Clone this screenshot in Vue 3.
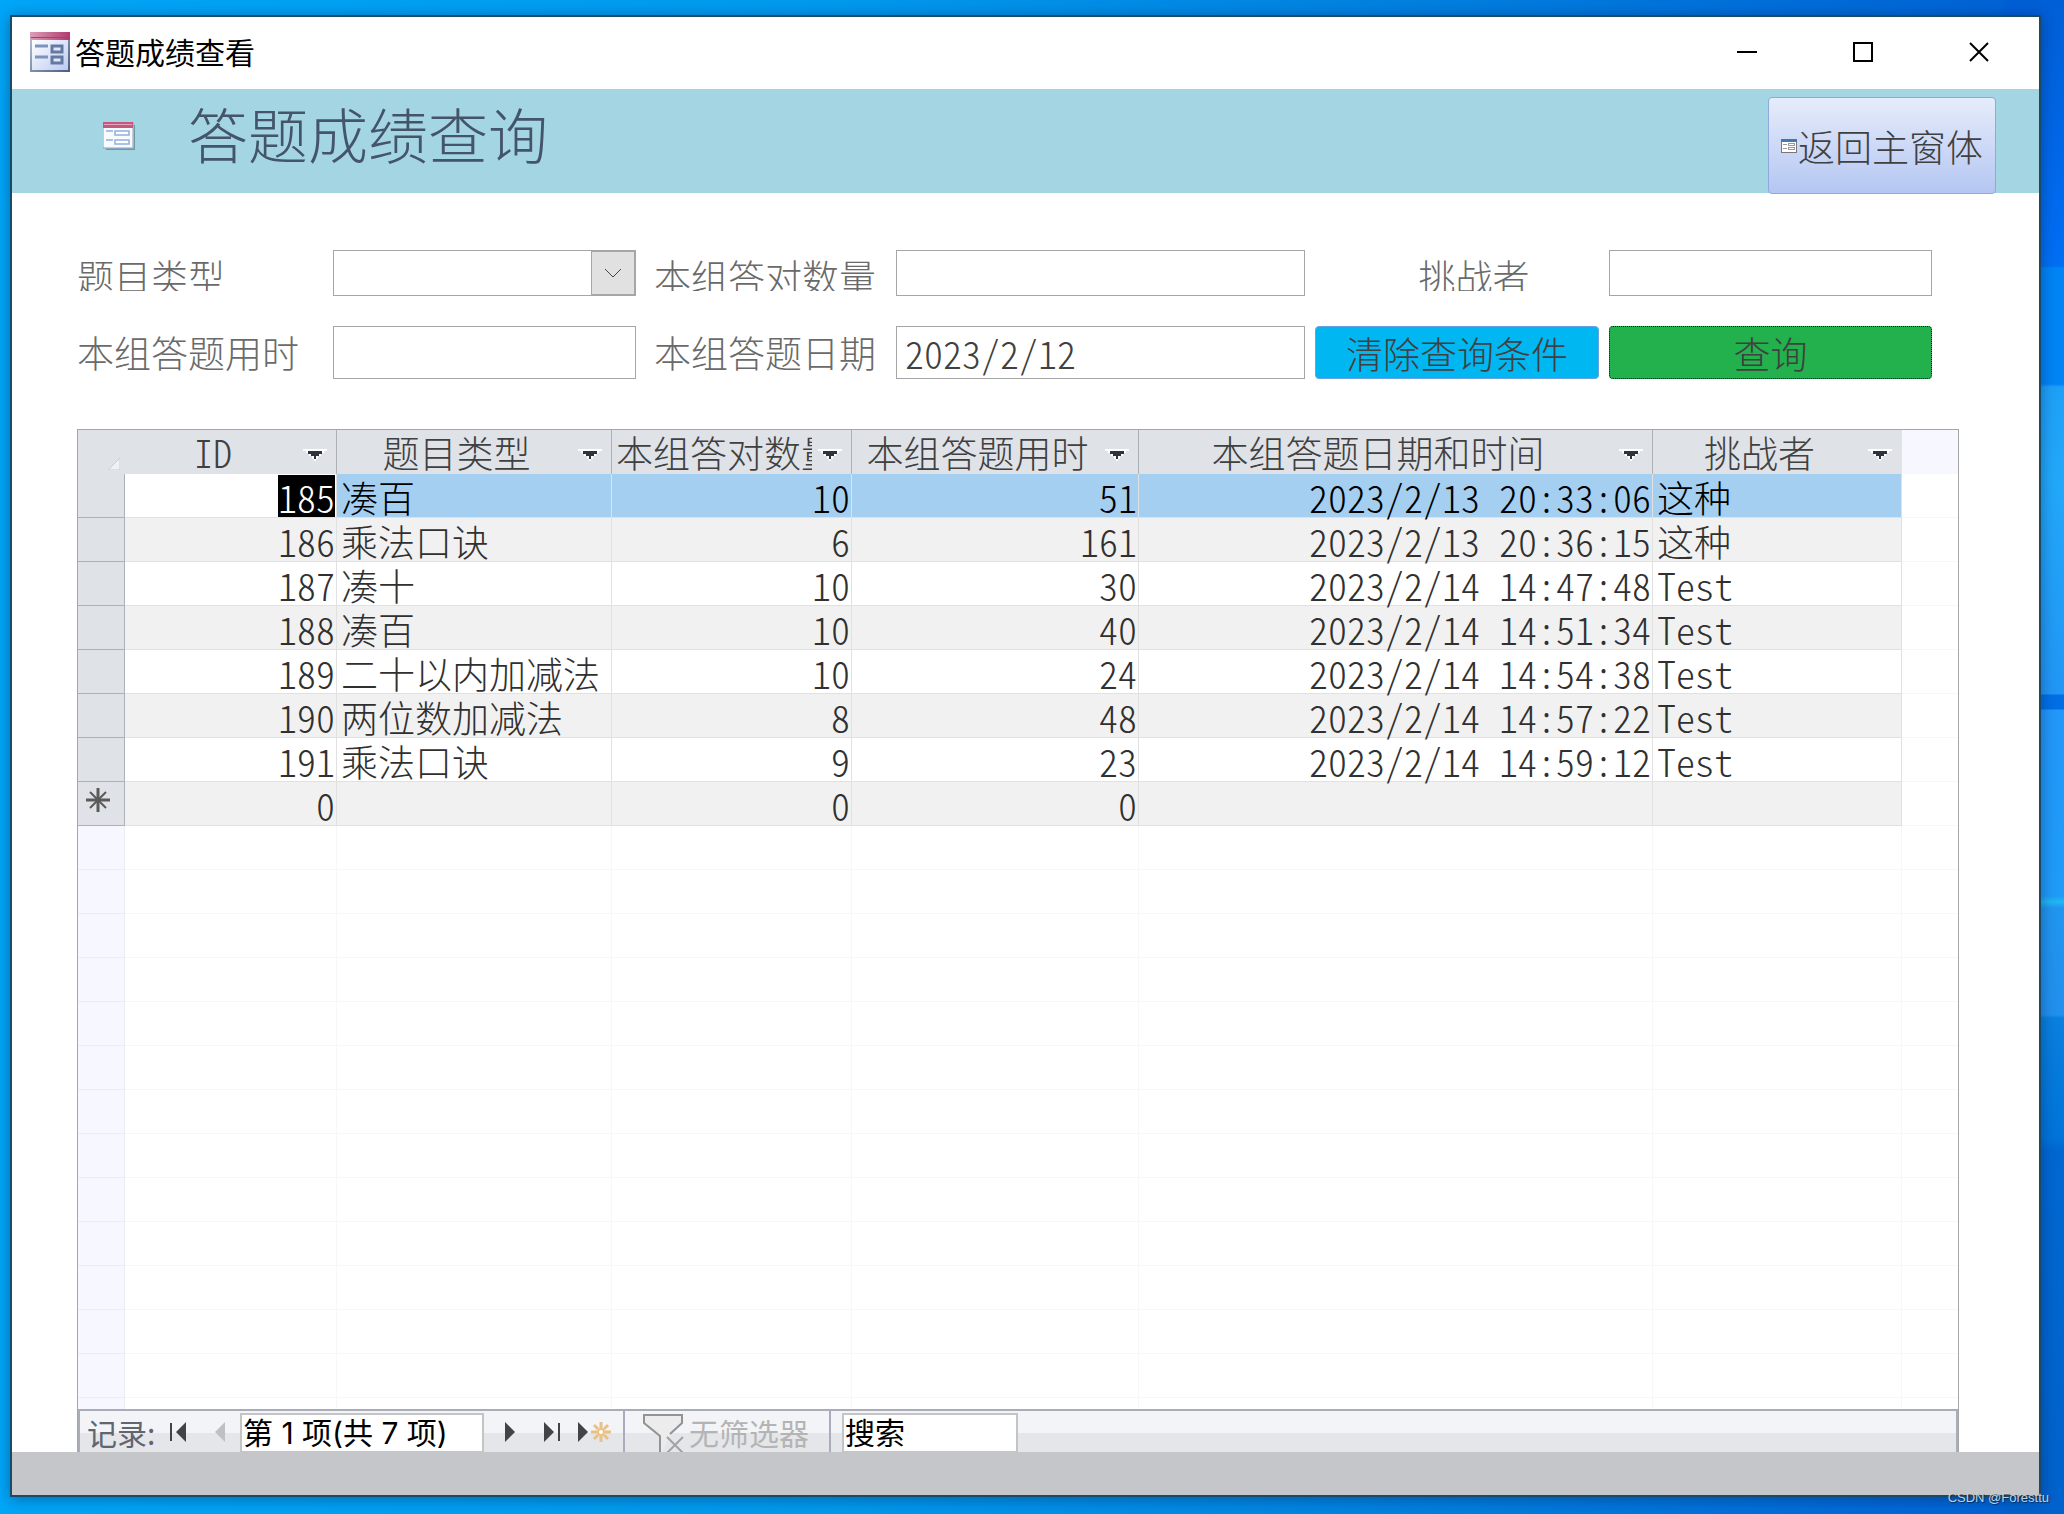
<script setup>
import { ref } from 'vue'

const questionType = ref('')
const correctCount = ref('')
const challenger = ref('')
const duration = ref('')
const answerDate = ref('2023/2/12')
const recordPosition = ref('第 1 项(共 7 项)')
const keyword = ref('搜索')

const questionTypes = ['', '凑十', '凑百', '乘法口诀', '二十以内加减法', '两位数加减法']

const columns = [
  { key: 'id', label: 'ID', numeric: true },
  { key: 'type', label: '题目类型' },
  { key: 'correct', label: '本组答对数量', numeric: true },
  { key: 'seconds', label: '本组答题用时', numeric: true },
  { key: 'time', label: '本组答题日期和时间', numeric: true },
  { key: 'who', label: '挑战者' },
]

const rows = [
  { id: 185, type: '凑百', correct: 10, seconds: 51, time: '2023/2/13 20:33:06', who: '这种' },
  { id: 186, type: '乘法口诀', correct: 6, seconds: 161, time: '2023/2/13 20:36:15', who: '这种' },
  { id: 187, type: '凑十', correct: 10, seconds: 30, time: '2023/2/14 14:47:48', who: 'Test' },
  { id: 188, type: '凑百', correct: 10, seconds: 40, time: '2023/2/14 14:51:34', who: 'Test' },
  { id: 189, type: '二十以内加减法', correct: 10, seconds: 24, time: '2023/2/14 14:54:38', who: 'Test' },
  { id: 190, type: '两位数加减法', correct: 8, seconds: 48, time: '2023/2/14 14:57:22', who: 'Test' },
  { id: 191, type: '乘法口诀', correct: 9, seconds: 23, time: '2023/2/14 14:59:12', who: 'Test' },
  { id: 0, type: '', correct: 0, seconds: 0, time: '', who: '', isNew: true },
]

const isLatin = (value) => /^[\x20-\x7e]+$/.test(String(value))

function clearFilters() {
  questionType.value = ''
  correctCount.value = ''
  challenger.value = ''
  duration.value = ''
  answerDate.value = ''
}
</script>

<template>
  <div class="desktop">
    <main class="window">
      <header class="titlebar">
        <svg class="app-icon" viewBox="0 0 40 40" aria-hidden="true">
          <defs>
            <linearGradient id="capGrad" x1="0" x2="1" y1="0" y2="0">
              <stop offset="0" stop-color="#dc9db6" />
              <stop offset="1" stop-color="#b03a6c" />
            </linearGradient>
            <linearGradient id="bodyGrad" x1="0" x2="1" y1="0" y2="1">
              <stop offset="0" stop-color="#ffffff" />
              <stop offset="1" stop-color="#bccaf2" />
            </linearGradient>
            <linearGradient id="rimGrad" x1="0" x2="1" y1="0" y2="1">
              <stop offset="0" stop-color="#b9c3dc" />
              <stop offset="1" stop-color="#4a5c80" />
            </linearGradient>
          </defs>
          <rect width="40" height="40" fill="url(#rimGrad)" />
          <rect x="2" y="8" width="36" height="30" fill="url(#bodyGrad)" />
          <rect width="40" height="8" fill="url(#capGrad)" />
          <path d="M1 5.500h38" stroke="#a8406c" stroke-width="1" />
          <path d="M5 14h13M5 25h13" stroke="#7d92c0" stroke-width="3" />
          <rect x="22" y="14" width="10" height="6" fill="#dfe6f5" stroke="#6478a4" stroke-width="3" />
          <rect x="22" y="25" width="10" height="6" fill="#dfe6f5" stroke="#6478a4" stroke-width="3" />
        </svg>
        <span class="caption">答题成绩查看</span>
        <div class="window-buttons">
          <button type="button" aria-label="最小化">
            <svg viewBox="0 0 20 20"><path d="M0 10h20" /></svg>
          </button>
          <button type="button" aria-label="最大化">
            <svg viewBox="0 0 20 20"><path d="M1 1h18v18H1z" /></svg>
          </button>
          <button type="button" aria-label="关闭">
            <svg viewBox="0 0 20 20"><path d="M1 1l18 18M19 1L1 19" /></svg>
          </button>
        </div>
      </header>

      <section class="banner">
        <svg class="form-icon" viewBox="0 0 32 28" aria-hidden="true">
          <path d="M3 27.500h29V3" fill="none" stroke="#4d6a80" stroke-opacity=".6" stroke-width="2" />
          <rect width="30" height="26" fill="#fafbff" stroke="#8f9dbc" stroke-width="1" />
          <rect width="30" height="6" fill="#c4587f" />
          <path d="M1 2.500h28" stroke="#e2a3bb" />
          <path d="M3 9h7M3 18h7" stroke="#a9c2e6" stroke-width="2" />
          <rect x="12" y="9" width="14" height="4" fill="#fff" stroke="#8fb0de" stroke-width="1.500" />
          <rect x="12" y="18" width="14" height="4" fill="#fff" stroke="#8fb0de" stroke-width="1.500" />
        </svg>
        <h1>答题成绩查询</h1>
        <button type="button" class="back">
          <svg viewBox="0 0 16 14" aria-hidden="true">
            <rect x=".5" y=".5" width="15" height="13" fill="#fff" stroke="#777" />
            <rect width="16" height="3" fill="#4577b5" />
            <path d="M2 5.500h4M2 9.500h4" stroke="#999" />
            <rect x="7.500" y="4.500" width="6" height="2" fill="none" stroke="#999" />
            <rect x="7.500" y="8.500" width="6" height="2" fill="none" stroke="#999" />
          </svg>
          <span>返回主窗体</span>
        </button>
      </section>

      <form class="filters" @submit.prevent>
        <label class="short" for="f-type">题目类型</label>
        <div class="combo">
          <select id="f-type" v-model="questionType">
            <option v-for="t in questionTypes" :key="t" :value="t">{{ t }}</option>
          </select>
          <span class="combo-arrow" aria-hidden="true">
            <svg viewBox="0 0 18 10"><path d="M1 1l8 8 8-8" /></svg>
          </span>
        </div>
        <label class="short indent" for="f-correct">本组答对数量</label>
        <input id="f-correct" v-model="correctCount" type="text" />
        <label class="short centered" for="f-who">挑战者</label>
        <input id="f-who" v-model="challenger" type="text" />

        <label for="f-duration">本组答题用时</label>
        <input id="f-duration" v-model="duration" type="text" />
        <label class="indent" for="f-date">本组答题日期</label>
        <input id="f-date" v-model="answerDate" type="text" />
        <button type="button" class="clear" @click="clearFilters">清除查询条件</button>
        <button type="submit" class="query">查询</button>
      </form>

      <section class="datasheet">
        <div class="grid">
          <table>
            <colgroup>
              <col class="c-head" />
              <col v-for="c in columns" :key="c.key" :class="'c-' + c.key" />
              <col />
            </colgroup>
            <thead>
              <tr>
                <th class="corner">
                  <svg viewBox="0 0 12 12" aria-hidden="true"><path d="M12 0v12H0z" /></svg>
                </th>
                <th v-for="c in columns" :key="c.key" scope="col" :class="{ latin: isLatin(c.label) }">
                  <div class="th-inner">
                    <span>{{ c.label }}</span>
                    <svg viewBox="0 0 24 12" aria-hidden="true">
                      <path d="M0 0h24v2h-3v2h-3v3h-3v3h-2v2h-2v-2H9V7H6V4H3V2H0z" fill="#fff" />
                      <path d="M5 2h14v3h-3v2h-3v3h-2V7H8V5H5z" fill="#2c3440" />
                    </svg>
                  </div>
                </th>
                <td class="filler"></td>
              </tr>
            </thead>
            <tbody>
              <tr v-for="(r, i) in rows" :key="r.id" :class="{ current: i === 0, alt: i % 2 === 1 }">
                <td class="selector">
                  <svg v-if="r.isNew" viewBox="0 0 24 24" aria-label="新记录">
                    <path d="M12 0v24M0 12h24" stroke-width="3" />
                    <path d="M4 4l16 16M20 4L4 20" stroke-width="2" />
                  </svg>
                </td>
                <td
                  v-for="c in columns"
                  :key="c.key"
                  :class="{ numeric: c.numeric, latin: isLatin(r[c.key]) }"
                ><span>{{ r[c.key] }}</span></td>
                <td class="filler"></td>
              </tr>
              <tr v-for="n in 14" :key="'blank' + n" class="blank">
                <td class="selector"></td>
                <td v-for="c in columns" :key="c.key"></td>
                <td class="filler"></td>
              </tr>
            </tbody>
          </table>
        </div>

        <nav class="records">
          <div class="pager">
            <label for="nav-position">记录:</label>
            <button type="button" class="first" aria-label="第一条">
              <svg viewBox="0 0 16 20"><path d="M0 1h2v18H0zM16 0v20L6 10z" /></svg>
            </button>
            <button type="button" class="prev" disabled aria-label="上一条">
              <svg viewBox="0 0 16 20"><path d="M13 0v20L3 10z" /></svg>
            </button>
            <input id="nav-position" v-model="recordPosition" type="text" />
            <button type="button" class="next" aria-label="下一条">
              <svg viewBox="0 0 16 20"><path d="M3 0v20l10-10z" /></svg>
            </button>
            <button type="button" class="last" aria-label="最后一条">
              <svg viewBox="0 0 16 20"><path d="M0 0v20l10-10zM14 1h2v18h-2z" /></svg>
            </button>
            <button type="button" class="add" aria-label="新记录">
              <svg viewBox="0 0 32 20">
                <path d="M0 0v20l10-10z" />
                <path
                  d="M23 0v6M23 14v6M13 10h6M27 10h6M16 3l4 4M26 13l4 4M30 3l-4 4M20 13l-4 4"
                  stroke="#eac183"
                  stroke-width="3"
                />
                <circle cx="23" cy="10" r="3" fill="#fff" stroke="#eac183" stroke-width="2" />
              </svg>
            </button>
          </div>
          <button type="button" class="filter" disabled>
            <svg viewBox="0 0 42 40" aria-hidden="true">
              <path d="M1 1h38v8L27 20v2L18 40V22L1 9z" fill="#ececec" stroke="none" />
              <path d="M27 20L39 9V1H1v8l16 13v18" fill="none" stroke="#939393" stroke-width="2" />
              <path d="M24 23l17 17M40 23L23 40" fill="none" stroke="#a2a2a2" stroke-width="2" />
            </svg>
            <span>无筛选器</span>
          </button>
          <input v-model="keyword" class="search" type="text" aria-label="搜索" />
        </nav>
      </section>

      <footer class="form-footer"></footer>
    </main>
    <p class="watermark">CSDN @Foresttu</p>
  </div>
</template>

<style>
body {
  margin: 0;
}
</style>

<style scoped>
.desktop {
  position: relative;
  box-sizing: border-box;
  display: flex;
  min-height: 100vh;
  padding: 15px 23px 17px 10px;
  background:
    linear-gradient(180deg, #005fd6 0, #006cf2 230px, #0070f4 266px, #0084f6 268px, #0084f6 384px, #1ea0f8 387px, #22a8fa 480px, #2196f6 694px, #006fe6 695px, #006fe6 709px, #2298fb 710px, #1f9bf8 896px, #20b8f6 902px, #2196f0 908px, #2190ee 1015px, #0a80e0 1018px, #0074da 1138px, #0068d2 1150px, #0062cc 100%) right / 60px 100% no-repeat,
    linear-gradient(90deg, #00a6f8 0, #009aee 40%, #007fe0 70%, #0060d4 100%);
  font-family: "Noto Sans CJK SC", sans-serif;
  font-weight: 300;
}

.window {
  display: flex;
  flex: 1;
  flex-direction: column;
  min-width: 0;
  border: 2px solid #1a4a66;
  background: #fff;
  box-shadow: 0 2px 14px rgba(0, 20, 60, 0.4);
}

button,
input,
select {
  box-sizing: border-box;
  margin: 0;
  border-radius: 0;
  font: inherit;
}

button {
  padding: 0;
  border: 0;
  background: none;
}

.titlebar {
  display: flex;
  align-items: center;
  box-sizing: border-box;
  height: 72px;
  padding: 0 2px 2px 18px;
}

.app-icon {
  width: 40px;
  height: 40px;
}

.caption {
  flex: 1;
  margin: 0 0 2px 5px;
  font-size: 30px;
  font-weight: 400;
  line-height: 40px;
  color: #000;
}

.window-buttons {
  display: flex;
}

.window-buttons button {
  display: flex;
  align-items: center;
  justify-content: center;
  width: 116px;
  height: 70px;
}

.window-buttons svg {
  width: 20px;
  height: 20px;
  fill: none;
  stroke: #000;
  stroke-width: 2;
}

.banner {
  display: flex;
  align-items: flex-start;
  height: 104px;
  padding: 0 43px 0 91px;
  box-sizing: border-box;
  background: #a4d5e2;
}

.form-icon {
  width: 32px;
  height: 28px;
  margin-top: 33px;
}

h1 {
  flex: 1;
  margin: 0 0 0 53px;
  font-size: 60px;
  font-weight: 300;
  line-height: 88px;
  color: #44546a;
}

.back {
  display: flex;
  align-items: center;
  justify-content: center;
  width: 228px;
  height: 97px;
  margin-top: 8px;
  border: 1px solid #8ea9db;
  border-radius: 4px;
  background: linear-gradient(#e6ecfb, #b4c6f2);
  font-size: 37px;
  color: #404040;
}

.back svg {
  width: 16px;
  height: 14px;
  margin-right: 1px;
}

.filters {
  display: grid;
  grid-template-columns: 256fr 303fr 260fr 409fr 304fr 323fr;
  grid-template-rows: 46px 53px;
  row-gap: 30px;
  padding: 57px 107px 50px 65px;
  font-size: 37px;
  color: #404040;
}

.filters label {
  overflow: hidden;
  line-height: 52px;
  white-space: nowrap;
  color: #6a6a6a;
}

.filters label.short {
  height: 41px;
}

.filters label.indent {
  padding-left: 18px;
}

.filters label.centered {
  padding-left: 34px;
  text-align: center;
}

.filters input,
.combo {
  min-width: 0;
  border: 1px solid #a6a6a6;
  background: #fff;
}

.filters input {
  padding: 0 8px;
  font-feature-settings: "hwid";
  font-size: 38px;
  color: #404040;
}

.combo {
  position: relative;
  display: flex;
}

.combo select {
  flex: 1;
  min-width: 0;
  padding: 0 48px 0 8px;
  border: 0;
  background: none;
  appearance: none;
}

.combo-arrow {
  position: absolute;
  inset: 0 0 0 auto;
  display: flex;
  align-items: center;
  justify-content: center;
  width: 42px;
  border: 1px solid #a6a6a6;
  background: #e1e1e1;
  pointer-events: none;
}

.combo-arrow svg {
  width: 18px;
  height: 10px;
  fill: none;
  stroke: #444;
  stroke-width: 1;
}

.clear,
.query {
  border-radius: 4px;
  line-height: 50px;
  color: #404040;
}

.clear {
  margin: 0 10px;
  border: 1px solid #6aa2e0;
  background: #00b7f1;
}

.query {
  border: 1px dotted #001030;
  background: #23b14d;
}

.datasheet {
  display: flex;
  flex: 1 1 0;
  flex-direction: column;
  margin: 0 80px 0 65px;
  border: 1px solid #a6a6a6;
  border-bottom: 0;
}

.grid {
  flex: 1 1 0;
  min-height: 500px;
  overflow: hidden;
}

table {
  width: 100%;
  table-layout: fixed;
  border-collapse: separate;
  border-spacing: 0;
  font-size: 37px;
  color: #303030;
}

.c-head { width: 47px; }
.c-id { width: 212px; }
.c-type { width: 275px; }
.c-correct { width: 240px; }
.c-seconds { width: 287px; }
.c-time { width: 514px; }
.c-who { width: 249px; }

th,
td {
  box-sizing: border-box;
  height: 44px;
  padding: 3px 4px 0;
  border-right: 1px solid #e1e1e1;
  border-bottom: 1px solid #e1e1e1;
  line-height: 38px;
  white-space: nowrap;
  text-align: left;
}

th {
  padding: 0 0 0 4px;
  border-color: #acb1b8;
  border-bottom: 0;
  background: #dfe2e7;
  font-weight: 300;
  color: #404040;
}

th:nth-last-child(2) {
  border-color: #dfe2e7;
}

.th-inner {
  display: flex;
  align-items: center;
}

.th-inner span {
  flex: 1;
  min-width: 0;
  overflow: hidden;
  line-height: 42px;
  text-align: center;
}

.th-inner svg {
  flex: none;
  width: 24px;
  height: 12px;
  margin: 6px 9px 0 6px;
}

.corner {
  padding: 0;
  border-color: #dfe2e7;
  vertical-align: bottom;
}

.corner svg {
  display: block;
  width: 12px;
  height: 12px;
  margin: 0 4px 4px auto;
  fill: #eef1f8;
  stroke: #c4cde2;
}

.latin {
  font-feature-settings: "hwid";
  font-size: 38px;
}

td.numeric {
  padding-right: 1px;
  text-align: right;
}

.alt td {
  background: #f1f1f1;
}

.selector,
.alt .selector {
  padding: 0;
  border-color: #acb1b8;
  background: #dfe2e7;
}

.selector svg {
  display: block;
  width: 24px;
  height: 24px;
  margin: 0 auto 8px 8px;
  fill: none;
  stroke: #5a5a5a;
}

.current td {
  color: #000;
}

.current td:nth-child(n + 3) {
  background: #a4cff1;
}

.current td:nth-child(2) {
  padding-top: 0;
}

.current td:nth-child(2) span {
  display: inline-block;
  padding: 3px 0 1px;
  background: #000;
  color: #fff;
}

td.filler,
.current td.filler,
.alt td.filler {
  border-right: 0;
  border-color: #f7f7f7;
  background: #fff;
}

thead td.filler {
  background: #f6f7ff;
}

.blank td {
  border-color: #f7f7f7;
}

.blank .selector {
  border-color: #ececf4;
  background: #f6f7ff;
}

.records {
  box-sizing: border-box;
  display: flex;
  height: 43px;
  overflow: hidden;
  border: solid #a9adb9;
  border-width: 2px 2px 0;
  background: linear-gradient(#f3f4f7 0 22px, #e4e6ea 22px);
  font-size: 30px;
  font-weight: 400;
  line-height: 40px;
  color: #606570;
}

.records button {
  display: flex;
  align-items: center;
  height: 42px;
}

.pager {
  display: flex;
  align-items: center;
  height: 42px;
  border-right: 2px solid #a9adb9;
}

.pager label {
  width: 83px;
  padding-left: 7px;
}

.pager svg {
  width: 16px;
  height: 20px;
  fill: #404348;
}

.pager .add svg {
  width: 32px;
  overflow: visible;
}

.pager .prev {
  margin: 0 12px 0 26px;
}

.pager .prev svg {
  fill: #bfc0c3;
}

.pager .next {
  margin: 0 26px 0 18px;
}

.pager .add {
  margin: 0 13px 0 18px;
}

.records input {
  align-self: flex-start;
  height: 40px;
  margin-top: 2px;
  padding: 0 1px;
  border: 2px solid #c4c4c4;
  background: #fff;
  font-family: Inter, "Noto Sans CJK SC", sans-serif;
  color: #000;
}

.pager input {
  width: 244px;
}

.filter {
  width: 206px;
  padding-left: 18px;
  color: #b4b4b4;
}

.records .filter {
  border-right: 2px solid #a9adb9;
}

.filter svg {
  flex: none;
  align-self: flex-start;
  width: 42px;
  height: 40px;
  margin: 3px 4px 0 0;
}

.records .search {
  width: 176px;
  margin-left: 11px;
}

.form-footer {
  height: 43px;
  background: #c5c6ca;
}

.watermark {
  position: absolute;
  right: 15px;
  bottom: 7px;
  margin: 0;
  font-family: "Liberation Sans", sans-serif;
  font-size: 13px;
  line-height: 18px;
  color: #c8d0d8;
  text-shadow: 1px 1px 1px rgba(0, 0, 0, 0.5);
}
</style>
